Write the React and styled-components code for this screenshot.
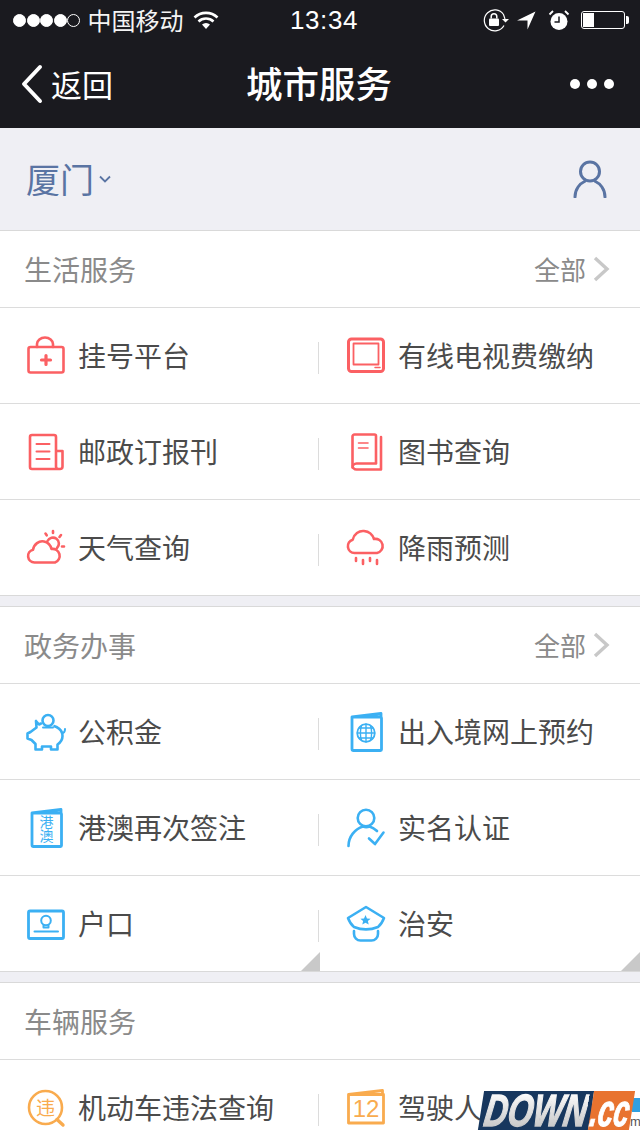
import React from "react";
import styled, { createGlobalStyle } from "styled-components";

const RED = "#fb6063";
const BLUE = "#3bb0f3";
const ORANGE = "#f9ab4e";

const GlobalStyle = createGlobalStyle`
  html, body {
    margin: 0;
    padding: 0;
    background: #efeff4;
  }
  body {
    font-family: "Noto Sans CJK SC", "Noto Sans", sans-serif;
  }
`;

const Page = styled.div`
  position: relative;
  width: 640px;
  height: 1136px;
  overflow: hidden;
  background: #efeff4;
`;

const StatusBar = styled.div`
  height: 40px;
  display: flex;
  align-items: center;
  justify-content: space-between;
  padding: 0 15px 0 13px;
  background: #1a1a1f;
  color: #fff;
  position: relative;
`;

const StatusGroup = styled.div`
  display: flex;
  align-items: center;
`;

const SignalDot = styled.span`
  width: 13px;
  height: 13px;
  box-sizing: border-box;
  margin-right: 0.5px;
  border-radius: 50%;
  border: 1px solid #fff;
  background: ${({ $on }) => ($on ? "#fff" : "transparent")};
`;

const Carrier = styled.span`
  margin: 0 9px 0 7px;
  font-size: 24px;
  line-height: 40px;
  color: #f4f4f4;
`;

const Clock = styled.span`
  position: absolute;
  left: 290px;
  top: 0;
  font-family: "Liberation Sans", Arial, sans-serif;
  font-size: 26px;
  line-height: 41px;
  letter-spacing: 0.6px;
`;

const Battery = styled.div`
  width: 44px;
  height: 18px;
  box-sizing: border-box;
  margin-left: 11px;
  padding: 1px;
  border: 1px solid #fff;
  border-radius: 3px;
  position: relative;
  &::after {
    content: "";
    position: absolute;
    right: -5px;
    top: 4px;
    width: 3px;
    height: 8px;
    border-radius: 0 2px 2px 0;
    background: #fff;
  }
`;

const BatteryFill = styled.div`
  width: 11px;
  height: 100%;
  background: #fff;
`;

const NavBar = styled.div`
  height: 88px;
  display: flex;
  align-items: center;
  justify-content: space-between;
  padding: 0 26px 0 20px;
  background: #1a1a1f;
  color: #fff;
  position: relative;
`;

const BackLink = styled.div`
  display: flex;
  align-items: center;
  gap: 7px;
  font-size: 31px;
  line-height: 88px;
`;

const NavTitle = styled.div`
  position: absolute;
  left: 0;
  right: 0;
  top: 0;
  padding-right: 2px;
  text-align: center;
  font-size: 36.500px;
  font-weight: 500;
  line-height: 86px;
`;

const NavDots = styled.div`
  display: flex;
  gap: 7px;
`;

const NavDot = styled.span`
  width: 10px;
  height: 10px;
  border-radius: 50%;
  background: #fff;
`;

const CityBar = styled.div`
  height: 102px;
  display: flex;
  align-items: center;
  justify-content: space-between;
  padding: 0 33px 0 26px;
  color: #5a74a3;
`;

const CityName = styled.div`
  display: flex;
  align-items: center;
  gap: 5px;
  font-size: 34px;
  line-height: 102px;
`;

const Section = styled.section`
  margin-bottom: 10px;
  background: #fff;
  border-top: 1px solid #d9d9d9;
  border-bottom: 1px solid #d9d9d9;
`;

const SectionHeader = styled.div`
  height: 76px;
  display: flex;
  align-items: center;
  justify-content: space-between;
  padding: 0 29px 0 24px;
  border-bottom: 1px solid #dcdcdc;
  color: #8a8a8a;
`;

const SectionTitle = styled.h2`
  margin: 0;
  font-size: 28px;
  font-weight: 400;
  line-height: 76px;
`;

const MoreLink = styled.div`
  display: flex;
  align-items: center;
  gap: 7px;
  font-size: 26px;
  line-height: 76px;
`;

const Row = styled.div`
  height: 95px;
  display: grid;
  grid-template-columns: 320px 320px;
  align-items: stretch;
  & + & {
    border-top: 1px solid #dcdcdc;
  }
`;

const Cell = styled.div`
  position: relative;
  display: flex;
  align-items: center;
  gap: 12px;
  padding-left: 26px;
  color: #4b4b4b;
  font-size: 28px;
  &:first-child::after {
    content: "";
    position: absolute;
    right: 1px;
    top: 34px;
    width: 1px;
    height: 32px;
    background: #dcdcdc;
  }
`;

const CellLabel = styled.span`
  white-space: nowrap;
  line-height: 95px;
`;

const CornerMark = styled.span`
  position: absolute;
  right: 0;
  bottom: 0;
  width: 0;
  height: 0;
  border-style: solid;
  border-width: 0 0 19px 19px;
  border-color: transparent transparent #c9c9c9 transparent;
`;

const IconSvg = styled.svg.attrs({ viewBox: "0 0 40 40", fill: "none" })`
  width: 40px;
  height: 40px;
  flex: none;
  stroke: ${({ $color }) => $color};
  stroke-width: 2.6;
  stroke-linecap: round;
  stroke-linejoin: round;
`;

const IconText = styled.text`
  fill: ${({ $color }) => $color};
  stroke: none;
  font-family: ${({ $latin }) => ($latin ? '"Liberation Sans", Arial, sans-serif' : '"Noto Sans CJK SC", sans-serif')};
  font-size: ${({ $size }) => $size}px;
  text-anchor: middle;
  writing-mode: ${({ $vertical }) => ($vertical ? "vertical-rl" : "horizontal-tb")};
`;

const Watermark = styled.div`
  position: absolute;
  left: 481px;
  top: 1091px;
  width: 151px;
  height: 39px;
  display: flex;
  transform: skewX(-9deg);
  font-family: "Liberation Sans", Arial, sans-serif;
  font-style: italic;
  font-weight: 700;
  line-height: 39px;
  white-space: nowrap;
`;

const WatermarkLeft = styled.div`
  width: 110px;
  flex: none;
  box-sizing: border-box;
  padding-left: 4px;
  background: #17375e;
  font-size: 45px;
`;

const WatermarkWord = styled.span`
  display: inline-block;
  transform: scaleX(0.72);
  transform-origin: left;
  background: linear-gradient(#ffffff, #c4c4c4);
  -webkit-background-clip: text;
  background-clip: text;
  color: transparent;
  -webkit-text-stroke: 1.5px transparent;
`;

const WatermarkRight = styled.div`
  flex: 1;
  background: #e8732f;
  color: #fff;
  font-size: 45px;
  min-width: 0;
`;

const WatermarkTld = styled.span`
  display: inline-block;
  transform: scaleX(0.62);
  transform-origin: left;
  -webkit-text-stroke: 1px #fff;
`;

const WatermarkEdge = styled.span`
  position: absolute;
  left: 632px;
  top: 1098px;
  width: 8px;
  height: 14px;
  background: #2f9fe0;
`;

const WatermarkSuffix = styled.span`
  position: absolute;
  left: 630px;
  top: 1115px;
  font-family: "Liberation Sans", Arial, sans-serif;
  font-size: 13px;
  line-height: 14px;
  color: #555;
`;

const HospitalIcon = () => (
  <IconSvg $color={RED}>
    <rect x="2.500" y="11" width="35" height="25.500" rx="2" />
    <path d="M11 11V8a8 6.500 0 0 1 16 0v3" />
    <path d="M20 19.500v9M15.500 24h9" strokeWidth="3.200" />
  </IconSvg>
);

const TvIcon = () => (
  <IconSvg $color={RED}>
    <rect x="2.500" y="3" width="35" height="32.500" rx="3" strokeWidth="3" />
    <rect x="7.500" y="7.500" width="25" height="21" strokeWidth="1.800" />
    <path d="M29 31.500h5" strokeWidth="1.500" />
  </IconSvg>
);

const NewsIcon = () => (
  <IconSvg $color={RED}>
    <path d="M30 19V5a2 2 0 0 0-2-2H6a2 2 0 0 0-2 2v30a2 2 0 0 0 2 2h28a2.500 2.500 0 0 0 2.500-2.500V19H30v15.500a2.500 2.500 0 0 0 2.500 2.500" />
    <path d="M10.500 12h13M10.500 19.500h13M10.500 27h13" strokeWidth="2" />
  </IconSvg>
);

const BookIcon = () => (
  <IconSvg $color={RED}>
    <path d="M30 31V4a1.500 1.500 0 0 0-1.500-1.500H8.500A2 2 0 0 0 6.500 4.500v29a4 4 0 0 0 4 4H35V5" />
    <path d="M30 31.500H10.500a4 4 0 0 0-4 4" />
    <path d="M12.500 11h9.500M12.500 16h9.500" strokeWidth="1.600" />
  </IconSvg>
);

const WeatherIcon = () => (
  <IconSvg $color={RED}>
    <path d="M10 34.500H8.500a6.500 6.500 0 0 1-1.500-12.800C8 16 13 12.500 18 13.500c3.500.700 6.500 3.500 7.500 7.500a7 7 0 0 1 3.500 13.500z" />
    <path d="M21.500 13a6 6 0 1 1 9.500 7" />
    <path d="M27 3v2M19.500 5.500l1.200 1.800M35 7l-1.500 2M38 18.500h-2" strokeWidth="2.600" />
  </IconSvg>
);

const RainIcon = () => (
  <IconSvg $color={RED}>
    <path d="M10 25H8.500a6.800 6.800 0 0 1-1.800-13.300C8 6 13 2.500 18 3c5 .5 8.500 3.500 10 8a7 7 0 0 1 3 14z" />
    <path d="M10 30v3M17 32v4M24 30v3M31 32v4" />
  </IconSvg>
);

const PiggyIcon = () => (
  <IconSvg $color={BLUE}>
    <circle cx="22" cy="8.500" r="5.500" />
    <path d="M15 11.500l-2 1-3-3.500.5 6.500-6 4.500-3 1.500v5l4 1.500 4 4v5.500h6.500v-3h9v3h6.500v-5c3-2 5-5 5-8.500 0-4-2-7-6-9l-2-.8" />
    <path d="M17 15.500h10" strokeWidth="2" />
    <path d="M36 21c2 0 3-1.500 3-4" strokeWidth="2" />
  </IconSvg>
);

const PassportIcon = () => (
  <IconSvg $color={BLUE}>
    <path d="M6 5v32a1.500 1.500 0 0 0 1.500 1.500h27a1 1 0 0 0 1-1V6a1 1 0 0 0-1-1H6l29-3.500V5" strokeWidth="2.800" />
    <circle cx="20" cy="21" r="8.800" strokeWidth="1.800" />
    <path d="M11.500 21h17M13 16h14M13 26h14M20 12v18M15.500 13.500c-1.500 5-1.500 10 0 15M24.500 13.500c1.500 5 1.500 10 0 15" strokeWidth="1.400" />
  </IconSvg>
);

const VisaIcon = () => (
  <IconSvg $color={BLUE}>
    <path d="M6 5v32a1.500 1.500 0 0 0 1.500 1.500h27a1 1 0 0 0 1-1V6a1 1 0 0 0-1-1H6l29-3.500V5" strokeWidth="2.800" />
    <IconText $color={BLUE} $vertical $size={14} x="20.500" y="21">港澳</IconText>
  </IconSvg>
);

const VerifiedIcon = () => (
  <IconSvg $color={BLUE}>
    <circle cx="20" cy="10" r="8.300" />
    <path d="M2.500 38c0-9.500 6.500-17 14.500-19.500a9 9 0 0 0 6.500 0c3 1 5.500 2.500 7.500 4.500" />
    <path d="M23 30.500l6 5.500 8.500-11.500" />
  </IconSvg>
);

const HukouIcon = () => (
  <IconSvg $color={BLUE}>
    <rect x="2.500" y="7" width="35" height="27.500" rx="1.500" strokeWidth="2.800" />
    <circle cx="20" cy="16.500" r="4.800" strokeWidth="2" />
    <path d="M17.500 21v2.500h5V21" strokeWidth="2" />
    <path d="M8.500 27.500h23.500" strokeWidth="2" />
  </IconSvg>
);

const PoliceIcon = () => (
  <IconSvg $color={BLUE}>
    <path d="M2 14L20 3l18 11c-1.500 4-3.500 7-6 9-7.500 3-16.500 3-24 0-2.500-2-4.500-5-6-9z" />
    <path d="M8 27v3a6.500 6.500 0 0 0 6.500 6.500h11A6.500 6.500 0 0 0 32 30v-3" />
    <path d="M19.500 11l1.500 3.400 3.600.3-2.700 2.400.8 3.500-3.200-1.900-3.200 1.900.8-3.500-2.700-2.400 3.600-.3z" fill={BLUE} stroke="none" />
  </IconSvg>
);

const ViolationIcon = () => (
  <IconSvg $color={ORANGE}>
    <circle cx="19.500" cy="19.500" r="16.500" />
    <path d="M31 31.500l6 5.500" strokeWidth="3.400" />
    <IconText $color={ORANGE} $size={19} x="19.500" y="26.500">违</IconText>
  </IconSvg>
);

const CalendarIcon = () => (
  <IconSvg $color={ORANGE}>
    <path d="M2.500 6.500v28.500h35V6.500h-35l34-4v4" strokeWidth="2.800" />
    <IconText $color={ORANGE} $latin $size={24} x="20" y="29">12</IconText>
  </IconSvg>
);

const SECTIONS = [
  {
    title: "生活服务",
    more: true,
    rows: [
      [
        { label: "挂号平台", Icon: HospitalIcon },
        { label: "有线电视费缴纳", Icon: TvIcon },
      ],
      [
        { label: "邮政订报刊", Icon: NewsIcon },
        { label: "图书查询", Icon: BookIcon },
      ],
      [
        { label: "天气查询", Icon: WeatherIcon },
        { label: "降雨预测", Icon: RainIcon },
      ],
    ],
  },
  {
    title: "政务办事",
    more: true,
    rows: [
      [
        { label: "公积金", Icon: PiggyIcon },
        { label: "出入境网上预约", Icon: PassportIcon },
      ],
      [
        { label: "港澳再次签注", Icon: VisaIcon },
        { label: "实名认证", Icon: VerifiedIcon },
      ],
      [
        { label: "户口", Icon: HukouIcon, corner: true },
        { label: "治安", Icon: PoliceIcon, corner: true },
      ],
    ],
  },
  {
    title: "车辆服务",
    rows: [
      [
        { label: "机动车违法查询", Icon: ViolationIcon },
        { label: "驾驶人信息查询", Icon: CalendarIcon },
      ],
    ],
  },
];

function StatusIcons() {
  return (
    <StatusGroup>
      <svg width="30" height="24" viewBox="0 0 30 24" fill="none" stroke="#fff">
        <path d="M22 17.500A10.500 10.500 0 1 1 21.500 6.500l1.500 4.500" strokeWidth="1.200" />
        <path d="M20 11h7l-3.500 3.500z" fill="#fff" stroke="none" />
        <rect x="7" y="10.500" width="10" height="7.500" rx="1" fill="#fff" stroke="none" />
        <path d="M9.200 10.500V8.500a2.800 2.800 0 0 1 5.600 0v2" strokeWidth="1.500" />
      </svg>
      <svg width="20" height="20" viewBox="0 0 20 20" style={{ marginLeft: 5 }}>
        <path d="M0 10.500L18.500 1.500 10.500 19.500V10.500z" fill="#fff" />
      </svg>
      <svg width="22" height="22" viewBox="0 0 22 22" fill="none" style={{ marginLeft: 11 }}>
        <circle cx="11" cy="12.500" r="8.500" fill="#fff" />
        <path d="M11 7.500v5.500H6.500" stroke="#1a1a1f" strokeWidth="1.500" />
        <path d="M1.500 5.500L5 2M20.500 5.500L17 2" stroke="#fff" strokeWidth="1.800" />
      </svg>
      <Battery>
        <BatteryFill />
      </Battery>
    </StatusGroup>
  );
}

export default function App() {
  return (
    <Page>
      <GlobalStyle />

      <StatusBar>
        <StatusGroup>
          {[1, 2, 3, 4, 5].map((n) => (
            <SignalDot key={n} $on={n < 5} />
          ))}
          <Carrier>中国移动</Carrier>
          <svg width="26" height="20" viewBox="0 0 26 20" fill="none" stroke="#fff" strokeWidth="2.600">
            <path d="M1.500 7.500a16.500 16.500 0 0 1 23 0M5.500 11.500a11 11 0 0 1 15 0" />
            <path d="M13 19l-4-4.500a6 6 0 0 1 8 0z" fill="#fff" stroke="none" />
          </svg>
        </StatusGroup>
        <Clock>13:34</Clock>
        <StatusIcons />
      </StatusBar>

      <NavBar>
        <BackLink>
          <svg width="24" height="40" viewBox="0 0 24 40" fill="none" stroke="#fff" strokeWidth="4" strokeLinecap="round" strokeLinejoin="round">
            <path d="M20 3L4 20l16 17" />
          </svg>
          返回
        </BackLink>
        <NavTitle>城市服务</NavTitle>
        <NavDots>
          <NavDot />
          <NavDot />
          <NavDot />
        </NavDots>
      </NavBar>

      <CityBar>
        <CityName>
          厦门
          <svg width="12" height="8" viewBox="0 0 12 8" fill="none" stroke="#5a74a3" strokeWidth="1.800">
            <path d="M1 1.500l5 5 5-5" />
          </svg>
        </CityName>
        <svg width="34" height="38" viewBox="0 0 34 38" fill="none" stroke="#5a74a3" strokeWidth="3" strokeLinecap="round">
          <circle cx="17" cy="11.500" r="9.500" />
          <path d="M2 37c0-8 5-13.500 9.500-15.500M32 37c0-8-5-13.500-9.500-15.500" />
        </svg>
      </CityBar>

      {SECTIONS.map((section) => (
        <Section key={section.title}>
          <SectionHeader>
            <SectionTitle>{section.title}</SectionTitle>
            {section.more && (
              <MoreLink>
                全部
                <svg width="18" height="26" viewBox="0 0 18 26" fill="none" stroke="#c8c8c8" strokeWidth="3.400">
                  <path d="M2 2l12 11L2 24" />
                </svg>
              </MoreLink>
            )}
          </SectionHeader>
          {section.rows.map((row) => (
            <Row key={row[0].label}>
              {row.map(({ label, Icon, corner }) => (
                <Cell key={label}>
                  <Icon />
                  <CellLabel>{label}</CellLabel>
                  {corner && <CornerMark />}
                </Cell>
              ))}
            </Row>
          ))}
        </Section>
      ))}

      <WatermarkEdge />
      <WatermarkSuffix>m</WatermarkSuffix>
      <Watermark>
        <WatermarkLeft>
          <WatermarkWord>DOWN</WatermarkWord>
        </WatermarkLeft>
        <WatermarkRight>
          <WatermarkTld>.cc</WatermarkTld>
        </WatermarkRight>
      </Watermark>
    </Page>
  );
}
